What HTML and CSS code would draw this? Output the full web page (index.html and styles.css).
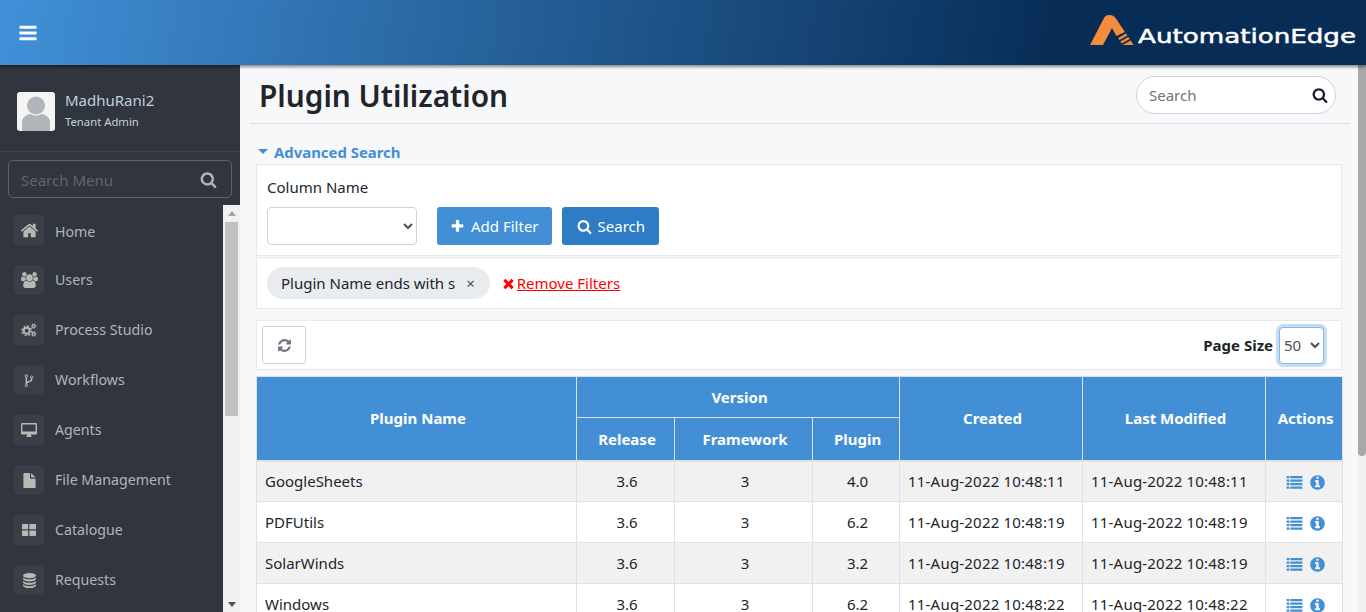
FILE: index.html
```html
<!DOCTYPE html>
<html lang="en">
<head>
  <meta charset="UTF-8">
  <title>Plugin Utilization</title>
  <link rel="stylesheet" href="styles.css">
</head>
<body>
  <!-- icon set -->
  <svg class="defs" width="0" height="0">
    <symbol id="i-search" viewBox="0 0 1792 1792"><path d="M1216 832q0-185-131.5-316.5t-316.5-131.5-316.5 131.5-131.5 316.5 131.5 316.5 316.5 131.5 316.5-131.5 131.5-316.5zm512 832q0 52-38 90t-90 38q-54 0-90-38l-343-342q-179 124-399 124-143 0-273.5-55.5t-225-150-150-225-55.5-273.5 55.5-273.5 150-225 225-150 273.5-55.5 273.5 55.5 225 150 150 225 55.5 273.5q0 220-124 399l343 343q37 37 37 90z"/></symbol>
    <symbol id="i-bars" viewBox="0 0 1792 1792"><path d="M1664 1344v128q0 26-19 45t-45 19h-1408q-26 0-45-19t-19-45v-128q0-26 19-45t45-19h1408q26 0 45 19t19 45zm0-512v128q0 26-19 45t-45 19h-1408q-26 0-45-19t-19-45v-128q0-26 19-45t45-19h1408q26 0 45 19t19 45zm0-512v128q0 26-19 45t-45 19h-1408q-26 0-45-19t-19-45v-128q0-26 19-45t45-19h1408q26 0 45 19t19 45z"/></symbol>
    <symbol id="i-home" viewBox="0 0 1792 1792"><path d="M1472 992v480q0 26-19 45t-45 19h-384v-384h-256v384h-384q-26 0-45-19t-19-45v-480q0-1 .5-3t.5-3l575-474 575 474q1 2 1 6zm223-69l-62 74q-8 9-21 11h-3q-13 0-21-7l-692-577-692 577q-12 8-24 7-13-2-21-11l-62-74q-8-10-7-23.5t11-21.5l719-599q32-26 76-26t76 26l244 204v-195q0-14 9-23t23-9h192q14 0 23 9t9 23v408l219 182q10 8 11 21.5t-7 23.5z"/></symbol>
    <symbol id="i-users" viewBox="0 0 1920 1792"><path d="M593 896q-162 5-265 128h-134q-82 0-138-40.5t-56-118.5q0-353 124-353 6 0 43.5 21t97.5 42.5 119 21.5q67 0 133-23-5 37-5 66 0 139 81 256zm1071 637q0 120-73 189.5t-194 69.5h-874q-121 0-194-69.5t-73-189.5q0-53 3.5-103.5t14-109 26.5-108.5 43-97.5 62-81 85.5-53.5 111.5-20q10 0 43 21.5t73 48 107 48 135 21.5 135-21.5 107-48 73-48 43-21.5q61 0 111.5 20t85.5 53.5 62 81 43 97.5 26.5 108.5 14 109 3.5 103.5zm-1024-1277q0 106-75 181t-181 75-181-75-75-181 75-181 181-75 181 75 75 181zm704 384q0 159-112.5 271.5t-271.5 112.5-271.5-112.5-112.5-271.5 112.5-271.5 271.5-112.5 271.5 112.5 112.5 271.5zm576 225q0 78-56 118.5t-138 40.5h-134q-103-123-265-128 81-117 81-256 0-29-5-66 66 23 133 23 59 0 119-21.5t97.5-42.5 43.5-21q124 0 124 353zm-128-609q0 106-75 181t-181 75-181-75-75-181 75-181 181-75 181 75 75 181z"/></symbol>
    <symbol id="i-cogs" viewBox="0 0 20 18">
      <circle cx="7" cy="10" r="3.8" fill="none" stroke="currentColor" stroke-width="2.6"/>
      <circle cx="7" cy="10" r="6" fill="none" stroke="currentColor" stroke-width="2" stroke-dasharray="2.4 2.3"/>
      <circle cx="16" cy="4" r="1.8" fill="none" stroke="currentColor" stroke-width="1.6"/>
      <circle cx="16" cy="4" r="3.2" fill="none" stroke="currentColor" stroke-width="1" stroke-dasharray="1.3 1.2"/>
      <circle cx="16" cy="14" r="1.8" fill="none" stroke="currentColor" stroke-width="1.6"/>
      <circle cx="16" cy="14" r="3.2" fill="none" stroke="currentColor" stroke-width="1" stroke-dasharray="1.3 1.2"/>
    </symbol>
    <symbol id="i-fork" viewBox="0 0 1024 1792"><path d="M288 1504q0-40-28-68t-68-28-68 28-28 68 28 68 68 28 68-28 28-68zm0-1152q0-40-28-68t-68-28-68 28-28 68 28 68 68 28 68-28 28-68zm640 128q0-40-28-68t-68-28-68 28-28 68 28 68 68 28 68-28 28-68zm96 0q0 52-26 96.5t-70 69.5q-2 287-226 414-67 38-203 81-128 40-169.5 71t-41.5 100v26q44 25 70 69.5t26 96.5q0 80-56 136t-136 56-136-56-56-136q0-52 26-96.5t70-69.5v-820q-44-25-70-69.5t-26-96.5q0-80 56-136t136-56 136 56 56 136q0 52-26 96.5t-70 69.5v497q54-26 154-57 55-17 87.5-29.5t70.5-31 59-39.5 40.5-51 28-69.5 8.5-91.5q-44-25-70-69.5t-26-96.5q0-80 56-136t136-56 136 56 56 136z"/></symbol>
    <symbol id="i-desktop" viewBox="0 0 16 14"><path d="M1 0h14a1 1 0 0 1 1 1v9.5a1 1 0 0 1-1 1H9.8c.1.8.4 1.2.7 1.6v.9h-5v-.9c.3-.4.6-.8.7-1.6H1a1 1 0 0 1-1-1V1a1 1 0 0 1 1-1zm.4 1.4v7.2h13.2V1.4z"/></symbol>
    <symbol id="i-file" viewBox="0 0 13 16"><path d="M0 .8A.8.8 0 0 1 .8 0H7v5.2a.8.8 0 0 0 .8.8H13v9.2a.8.8 0 0 1-.8.8H.8a.8.8 0 0 1-.8-.8zM8.2 0 13 4.8H8.2z"/></symbol>
    <symbol id="i-grid" viewBox="0 0 14 12"><path d="M0 .8A.8.8 0 0 1 .8 0h5.4v5.2H0zM7.4 0h5.8a.8.8 0 0 1 .8.8v4.4H7.4zM0 6.6h6.2V12H.8a.8.8 0 0 1-.8-.8zM7.4 6.6H14v4.6a.8.8 0 0 1-.8.8H7.4z"/></symbol>
    <symbol id="i-db" viewBox="0 0 12 14"><ellipse cx="6" cy="2.4" rx="6" ry="2.4"/><path d="M0 3.9C1 5.3 3.4 5.9 6 5.9s5-.6 6-2v2C11 7.4 8.6 8 6 8S1 7.4 0 5.9zM0 7.2c1 1.4 3.4 2 6 2s5-.6 6-2v2c-1 1.5-3.4 2-6 2s-5-.5-6-2zM0 10.3c1 1.4 3.4 2 6 2s5-.6 6-2v1.3c0 1.4-2.7 2.4-6 2.4s-6-1-6-2.4z"/></symbol>
    <symbol id="i-plus" viewBox="0 0 1792 1792"><path d="M1600 736v192q0 40-28 68t-68 28h-416v416q0 40-28 68t-68 28h-192q-40 0-68-28t-28-68v-416h-416q-40 0-68-28t-28-68v-192q0-40 28-68t68-28h416v-416q0-40 28-68t68-28h192q40 0 68 28t28 68v416h416q40 0 68 28t28 68z"/></symbol>
    <symbol id="i-times" viewBox="0 0 1792 1792"><path d="M1490 1322q0 40-28 68l-136 136q-28 28-68 28t-68-28l-294-294-294 294q-28 28-68 28t-68-28l-136-136q-28-28-28-68t28-68l294-294-294-294q-28-28-28-68t28-68l136-136q28-28 68-28t68 28l294 294 294-294q28-28 68-28t68 28l136 136q28 28 28 68t-28 68l-294 294 294 294q28 28 28 68z"/></symbol>
    <symbol id="i-refresh" viewBox="0 0 1792 1792"><path d="M1639 1056q0 5-1 7-64 268-268 434.5t-478 166.5q-146 0-282.5-55t-243.5-157l-129 129q-19 19-45 19t-45-19-19-45v-448q0-26 19-45t45-19h448q26 0 45 19t19 45-19 45l-137 137q71 66 161 102t187 36q134 0 250-65t186-179q11-17 53-117 8-23 30-23h192q13 0 22.5 9.5t9.5 22.5zm25-800v448q0 26-19 45t-45 19h-448q-26 0-45-19t-19-45 19-45l138-138q-148-137-349-137-134 0-250 65t-186 179q-11 17-53 117-8 23-30 23h-199q-13 0-22.5-9.5t-9.5-22.5v-7q65-268 270-434.5t480-166.5q146 0 284 55.5t245 156.5l130-129q19-19 45-19t45 19 19 45z"/></symbol>
    <symbol id="i-list" viewBox="0 0 17 14"><path d="M0 0h3v2.4H0zM4 0h13v2.4H4zM0 3.800h3v2.4H0zM4 3.800h13v2.4H4zM0 7.600h3V10H0zM4 7.600h13V10H4zM0 11.400h3v2.400H0zM4 11.400h13v2.400H4z"/></symbol>
    <symbol id="i-info" viewBox="0 0 1792 1792"><path d="M1152 1376v-160q0-14-9-23t-23-9h-96v-512q0-14-9-23t-23-9h-320q-14 0-23 9t-9 23v160q0 14 9 23t23 9h96v320h-96q-14 0-23 9t-9 23v160q0 14 9 23t23 9h448q14 0 23-9t9-23zm-128-896v-160q0-14-9-23t-23-9h-192q-14 0-23 9t-9 23v160q0 14 9 23t23 9h192q14 0 23-9t9-23zm640 416q0 209-103 385.5t-279.5 279.5-385.5 103-385.5-103-279.5-279.5-103-385.5 103-385.5 279.5-279.5 385.5-103 385.5 103 279.5 279.5 103 385.5z"/></symbol>
  </svg>

  <header class="topbar">
    <svg class="menu-toggle"><use href="#i-bars"/></svg>
    <div class="logo">
      <svg class="logo-mark" viewBox="0 0 44 31">
        <path fill="#f68b3c" d="M0 30 14 3Q15.500 0 19.500 0T25.500 3L35 17 26.400 21 22 13 13 30z"/>
        <path fill="#f68b3c" d="M28.200 23 36.100 18.500 37.400 20.500 29.500 25zM30.400 26.500 38.400 22 39.700 24 31.700 28.500zM32.600 30 40.700 25.500 43.500 30z"/>
      </svg>
      <svg class="logo-word" viewBox="0 0 218 24">
        <text x="0" y="18" textLength="218" lengthAdjust="spacingAndGlyphs">AutomationEdge</text>
      </svg>
    </div>
  </header>

  <div class="app">
    <aside class="sidebar">
      <div class="user-box">
        <svg class="avatar" viewBox="0 0 38 39">
          <rect width="38" height="39" rx="3" fill="#f4f4f4"/>
          <circle cx="19" cy="13.500" r="9" fill="#aeb5bb"/>
          <path fill="#aeb5bb" d="M5 39v-9c0-5 5-7.500 9-8 1.500 1 3 1.500 5 1.500s3.500-.5 5-1.500c4 .5 9 3 9 8v9z"/>
        </svg>
        <div>
          <div class="user-name">MadhuRani2</div>
          <div class="user-role">Tenant Admin</div>
        </div>
      </div>
      <div class="menu-search">
        <input type="text" placeholder="Search Menu">
        <svg class="ic"><use href="#i-search"/></svg>
      </div>
      <div class="menu-wrap">
        <ul class="menu">
          <li><span class="tile"><svg class="ic-home"><use href="#i-home"/></svg></span>Home</li>
          <li><span class="tile"><svg class="ic-users"><use href="#i-users"/></svg></span>Users</li>
          <li><span class="tile"><svg class="ic-cogs"><use href="#i-cogs"/></svg></span>Process Studio</li>
          <li><span class="tile"><svg class="ic-fork"><use href="#i-fork"/></svg></span>Workflows</li>
          <li><span class="tile"><svg class="ic-desktop"><use href="#i-desktop"/></svg></span>Agents</li>
          <li><span class="tile"><svg class="ic-file"><use href="#i-file"/></svg></span>File Management</li>
          <li><span class="tile"><svg class="ic-grid"><use href="#i-grid"/></svg></span>Catalogue</li>
          <li><span class="tile"><svg class="ic-db"><use href="#i-db"/></svg></span>Requests</li>
        </ul>
        <div class="side-scroll">
          <span class="arrow-up"></span>
          <span class="side-thumb"></span>
          <span class="arrow-down"></span>
        </div>
      </div>
    </aside>

    <main class="main">
      <div class="content">
        <div class="title-bar">
          <h1>Plugin Utilization</h1>
          <div class="page-search">
            <input type="text" placeholder="Search">
            <svg><use href="#i-search"/></svg>
          </div>
        </div>

        <div class="adv-title"><span class="caret"></span>Advanced Search</div>
        <section class="panel filter-panel">
          <label class="field-label">Column Name</label>
          <div class="filter-row">
            <select class="column-select"><option></option></select>
            <button class="btn btn-light-blue"><svg><use href="#i-plus"/></svg>Add Filter</button>
            <button class="btn btn-blue"><svg><use href="#i-search"/></svg>Search</button>
          </div>
        </section>
        <section class="panel chips-panel">
          <span class="chip">Plugin Name ends with s<span class="chip-x">×</span></span>
          <svg class="remove-ic"><use href="#i-times"/></svg>
          <a class="remove-link" href="#">Remove Filters</a>
        </section>

        <section class="panel toolbar">
          <button class="refresh"><svg><use href="#i-refresh"/></svg></button>
          <div class="page-size">
            <b>Page Size</b>
            <select class="size-select"><option>50</option></select>
          </div>
        </section>

        <table class="grid">
          <colgroup>
            <col class="c-name"><col class="c-rel"><col class="c-fw"><col class="c-pl"><col class="c-date"><col class="c-date"><col class="c-act">
          </colgroup>
          <thead>
            <tr>
              <th rowspan="2">Plugin Name</th>
              <th colspan="3">Version</th>
              <th rowspan="2">Created</th>
              <th rowspan="2">Last Modified</th>
              <th rowspan="2">Actions</th>
            </tr>
            <tr class="sub-head"><th>Release</th><th>Framework</th><th>Plugin</th></tr>
          </thead>
          <tbody>
            <tr>
              <td class="left">GoogleSheets</td><td>3.6</td><td>3</td><td>4.0</td>
              <td class="date">11-Aug-2022 10:48:11</td><td class="date">11-Aug-2022 10:48:11</td>
              <td class="actions"><svg class="a-list"><use href="#i-list"/></svg><svg class="a-info"><use href="#i-info"/></svg></td>
            </tr>
            <tr>
              <td class="left">PDFUtils</td><td>3.6</td><td>3</td><td>6.2</td>
              <td class="date">11-Aug-2022 10:48:19</td><td class="date">11-Aug-2022 10:48:19</td>
              <td class="actions"><svg class="a-list"><use href="#i-list"/></svg><svg class="a-info"><use href="#i-info"/></svg></td>
            </tr>
            <tr>
              <td class="left">SolarWinds</td><td>3.6</td><td>3</td><td>3.2</td>
              <td class="date">11-Aug-2022 10:48:19</td><td class="date">11-Aug-2022 10:48:19</td>
              <td class="actions"><svg class="a-list"><use href="#i-list"/></svg><svg class="a-info"><use href="#i-info"/></svg></td>
            </tr>
            <tr>
              <td class="left">Windows</td><td>3.6</td><td>3</td><td>6.2</td>
              <td class="date">11-Aug-2022 10:48:22</td><td class="date">11-Aug-2022 10:48:22</td>
              <td class="actions"><svg class="a-list"><use href="#i-list"/></svg><svg class="a-info"><use href="#i-info"/></svg></td>
            </tr>
          </tbody>
        </table>
      </div>
      <div class="main-scroll"><span class="main-thumb"></span></div>
    </main>
  </div>
</body>
</html>
```

FILE: styles.css
```css
* {
  box-sizing: border-box;
}

html, body {
  margin: 0;
  height: 100%;
  overflow: hidden;
}

body {
  font-family: "Noto Sans", "Open Sans", sans-serif;
  font-size: 15px;
  color: #212529;
  background: #f7f8fa;
}

svg {
  fill: currentColor;
}

.defs {
  position: absolute;
}

/* top bar */
.topbar {
  position: relative;
  z-index: 2;
  height: 65px;
  display: flex;
  align-items: center;
  justify-content: space-between;
  padding-left: 18px;
  background: linear-gradient(100deg, #4190d8 0%, #072c55 78%, #072c55 100%);
  box-shadow: 0 2px 3px rgba(0, 0, 0, .45);
}

.menu-toggle {
  width: 20px;
  height: 20px;
  color: #fff;
}

.logo {
  display: flex;
  align-items: flex-end;
  margin-right: 10px;
  margin-top: -5px;
}

.logo-mark {
  width: 44px;
  height: 31px;
}

.logo-word {
  width: 218px;
  height: 24px;
  margin-left: 4px;
  margin-bottom: -3px;
}

.logo-word text {
  font-family: "DejaVu Sans", sans-serif;
  font-size: 20px;
  fill: #fff;
  stroke: #fff;
  stroke-width: .5px;
}

/* sidebar */
.app {
  display: flex;
  height: 547px;
}

.sidebar {
  width: 240px;
  flex: none;
  display: flex;
  flex-direction: column;
  background: #31353d;
  color: #b0b5bb;
}

.user-box {
  height: 87px;
  display: flex;
  align-items: center;
  gap: 10px;
  padding: 6px 0 0 17px;
  border-bottom: 1px solid #41454e;
}

.avatar {
  width: 38px;
  height: 39px;
}

.user-name {
  font-size: 15px;
  color: #bfd0e0;
  line-height: 22px;
}

.user-role {
  font-size: 11.3px;
  color: #c5d0da;
  line-height: 22px;
}

.menu-search {
  margin: 8px 8px 7px;
  height: 38px;
  display: flex;
  align-items: center;
  padding: 2px 14px 0 12px;
  border: 1px solid #5f636b;
  border-radius: 5px;
}

.menu-search input {
  flex: 1;
  min-width: 0;
  border: 0;
  outline: 0;
  padding: 0;
  background: none;
  font: inherit;
}

.menu-search input::placeholder {
  color: #62666e;
}

.menu-search .ic {
  width: 17px;
  height: 17px;
  margin-top: -2px;
  color: #b5b5b0;
}

.menu-wrap {
  flex: 1;
  min-height: 0;
  display: flex;
}

.menu {
  flex: 1;
  margin: 0;
  padding: 10px 0 0 14px;
  list-style: none;
  overflow: hidden;
}

.menu li {
  height: 50px;
  display: flex;
  align-items: flex-start;
  gap: 11px;
  line-height: 29px;
  font-size: 14.2px;
}

.menu li:first-child {
  line-height: 33px;
}

.tile {
  width: 30px;
  height: 30px;
  flex: none;
  display: flex;
  align-items: center;
  justify-content: center;
  background: #3a3e47;
  border-radius: 4px;
  color: #b8b8b4;
}

.ic-home { width: 19px; height: 19px; }
.ic-users { width: 17px; height: 16px; }
.ic-cogs { width: 16px; height: 14px; }
.ic-fork { width: 10px; height: 15px; }
.ic-desktop { width: 16px; height: 14px; }
.ic-file { width: 13px; height: 15px; }
.ic-grid { width: 14px; height: 12px; }
.ic-db { width: 13px; height: 15px; }

.side-scroll {
  width: 17px;
  flex: none;
  display: flex;
  flex-direction: column;
  align-items: center;
  background: #f1f1f1;
  padding-top: 6px;
}

.arrow-up {
  border: 4px solid transparent;
  border-top: 0;
  border-bottom: 5px solid #a3a3a3;
}

.side-thumb {
  width: 13px;
  height: 194px;
  margin-top: 6px;
  background: #c1c1c1;
}

.arrow-down {
  margin-top: auto;
  margin-bottom: 5px;
  border: 4px solid transparent;
  border-bottom: 0;
  border-top: 5px solid #505050;
}

/* main */
.main {
  flex: 1;
  min-width: 0;
  display: flex;
}

.content {
  flex: 1;
  min-width: 0;
  padding: 0 16px;
  overflow: hidden;
}

.main-scroll {
  width: 8px;
  flex: none;
  background: #f1f1f1;
}

.main-thumb {
  display: block;
  height: 391px;
  background: #a8a8a8;
  border-radius: 0 0 4px 4px;
}

.title-bar {
  height: 59px;
  margin: 0 -8px 0 -6px;
  display: flex;
  align-items: center;
  justify-content: space-between;
  padding: 2px 14px 0 9px;
  border-bottom: 1px solid #dcdfe3;
}

h1 {
  margin: 0;
  font-size: 29.8px;
  font-weight: 600;
  color: #212529;
}

.page-search {
  width: 200px;
  height: 38px;
  display: flex;
  align-items: center;
  padding: 0 7px 0 12px;
  background: #fff;
  border: 1px solid #ced4da;
  border-radius: 19px;
}

.page-search input {
  flex: 1;
  min-width: 0;
  border: 0;
  outline: 0;
  padding: 0;
  font: inherit;
}

.page-search input::placeholder {
  color: #6c757d;
}

.page-search svg {
  width: 16px;
  height: 16px;
  color: #16202b;
}

.adv-title {
  height: 40px;
  display: flex;
  align-items: center;
  padding: 15px 0 0 2px;
  font-weight: 700;
  font-size: 14.9px;
  color: #428fd6;
}

.caret {
  margin-right: 6px;
  border: 5px solid transparent;
  border-bottom: 0;
  border-top: 5px solid #428fd6;
}

.panel {
  background: #fff;
  border: 1px solid #e6e8ec;
}

.filter-panel {
  height: 92px;
  padding: 11px 10px 0;
}

.field-label {
  display: block;
  line-height: 22px;
}

.filter-row {
  display: flex;
  align-items: center;
  margin-top: 9px;
}

select {
  font: inherit;
  color: #495057;
  background-color: #fff;
  border: 1px solid #ced4da;
  border-radius: 4px;
}

.column-select {
  width: 150px;
  height: 38px;
  margin-right: 20px;
}

.btn {
  height: 38px;
  display: flex;
  align-items: center;
  gap: 6px;
  padding: 0 13px;
  border: 0;
  border-radius: 3px;
  color: #fff;
  font: inherit;
}

.btn svg {
  width: 15px;
  height: 15px;
}

.btn-light-blue {
  background: #428fd6;
  margin-right: 10px;
}

.btn-blue {
  padding: 0 14px 0 15px;
  background: #2e7cc6;
}

.chips-panel {
  height: 52px;
  margin-top: 1px;
  display: flex;
  align-items: center;
  padding-left: 10px;
}

.chip {
  height: 32px;
  display: flex;
  align-items: center;
  padding: 0 15px 0 14px;
  background: #e9ecef;
  border-radius: 16px;
}

.chip-x {
  margin-left: 11px;
  color: #495057;
}

.remove-ic {
  width: 15px;
  height: 15px;
  margin-left: 11px;
  margin-right: 1px;
  color: #f00;
}

.remove-link {
  color: #f00;
}

.toolbar {
  height: 50px;
  margin-top: 11px;
  display: flex;
  align-items: center;
  justify-content: space-between;
  padding: 0 17px 0 5px;
}

.refresh {
  width: 44px;
  height: 38px;
  display: flex;
  align-items: center;
  justify-content: center;
  background: #fff;
  border: 1px solid #ced4da;
  border-radius: 3px;
  color: #6c757d;
}

.refresh svg {
  width: 15px;
  height: 15px;
}

.page-size {
  display: flex;
  align-items: center;
  gap: 6px;
}

.size-select {
  width: 45px;
  height: 37px;
  border-color: #86b7e8;
  box-shadow: 0 0 0 3px #c6dcf5;
}

/* table */
.grid {
  width: 1086px;
  margin-top: 6px;
  table-layout: fixed;
  border-collapse: collapse;
}

.c-name { width: 320px; }
.c-rel { width: 98px; }
.c-fw { width: 138px; }
.c-pl { width: 87px; }
.c-date { width: 183px; }
.c-act { width: 77px; }

.grid th {
  height: 41px;
  background: #428fd6;
  color: #fff;
  font-weight: 700;
  text-align: center;
  border: 1px solid #dee2e6;
  padding: 0 0 0 3px;
}

.grid .sub-head th {
  height: 43px;
}

.grid td {
  height: 41px;
  text-align: center;
  border: 1px solid #dee2e6;
  padding: 0 0 0 3px;
}

.grid thead {
  border-bottom: 2px solid #dee2e6;
}

.grid td.left,
.grid td.date {
  text-align: left;
  padding-left: 8px;
}

.grid td.date {
  letter-spacing: .2px;
}

.grid td.actions {
  padding-left: 4px;
}

.grid tbody tr:nth-child(odd) td {
  background: #f1f1f1;
}

.grid tbody tr:nth-child(even) td {
  background: #fff;
}

.a-list {
  width: 17px;
  height: 13px;
  color: #428fd6;
  margin-right: 6px;
  vertical-align: middle;
}

.a-info {
  width: 17px;
  height: 17px;
  color: #428fd6;
  vertical-align: middle;
}
```
